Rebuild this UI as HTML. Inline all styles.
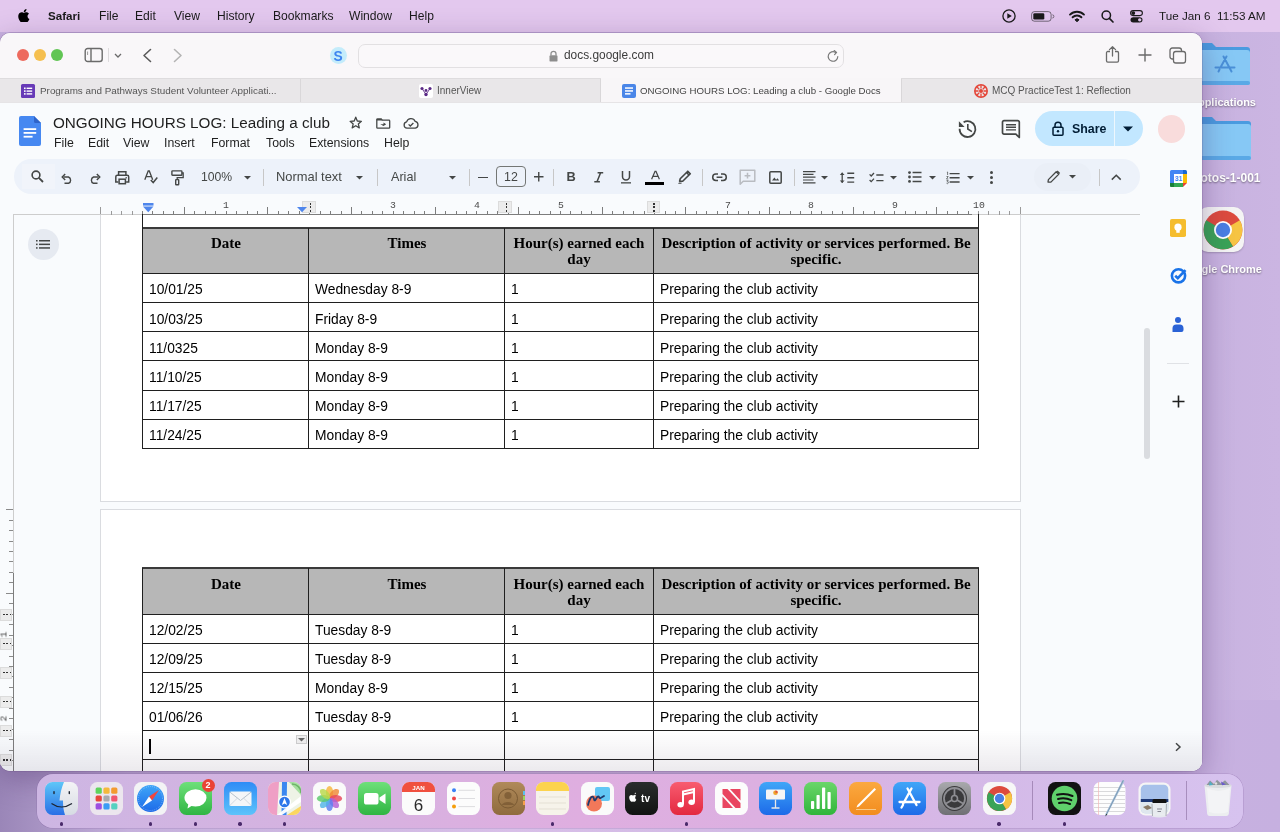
<!DOCTYPE html><html><head><meta charset="utf-8"><title>Docs</title><style>
*{margin:0;padding:0;box-sizing:border-box}
html,body{width:1280px;height:832px;overflow:hidden}
body{position:relative;background:#c8b2e0;font-family:"Liberation Sans",sans-serif;color:#000}
.ab{position:absolute}
.t{position:absolute;white-space:nowrap;line-height:1;will-change:transform}
#menubar{position:absolute;left:0;top:0;width:1280px;height:32px;background:#e3c8ee}
#win{position:absolute;left:0;top:33px;width:1202px;height:738px;border-radius:10px;overflow:hidden;background:#f9fbfd;box-shadow:0 0 0 0.5px rgba(90,60,110,.35),0 8px 30px rgba(60,30,90,.35)}
#stb{position:absolute;left:0;top:0;width:1202px;height:45px;background:#f9f7f9}
#tabs{position:absolute;left:0;top:45px;width:1202px;height:24px;background:#e9e7e9;border-top:1px solid #dcdadc;border-bottom:1px solid #e0dee0}
#dock{position:absolute;left:37px;top:774px;width:1206px;height:54px;border-radius:16px;background:linear-gradient(90deg,#cdb6e3 0%,#d6b2e0 25%,#dfaee0 45%,#dcb0e1 60%,#d4bae8 80%,#d7c3ef 100%);box-shadow:0 0 0 0.5px rgba(120,80,150,.35)}
</style></head><body>
<div id="menubar">
<svg class="ab" style="left:16.8px;top:8.5px" width="13.6" height="13.6" viewBox="0 0 24 24"><path fill="#000" d="M12.152 6.896c-.948 0-2.415-1.078-3.96-1.04-2.04.027-3.91 1.183-4.961 3.014-2.117 3.675-.546 9.103 1.519 12.09 1.013 1.454 2.208 3.09 3.792 3.039 1.52-.065 2.09-.987 3.935-.987 1.831 0 2.35.987 3.96.948 1.637-.026 2.676-1.48 3.676-2.948 1.156-1.688 1.636-3.325 1.662-3.415-.039-.013-3.182-1.221-3.22-4.857-.026-3.04 2.48-4.494 2.597-4.559-1.429-2.09-3.623-2.324-4.39-2.376-2-.156-3.675 1.09-4.61 1.09zM15.53 3.83c.843-1.012 1.4-2.427 1.245-3.83-1.207.052-2.662.805-3.532 1.818-.78.896-1.454 2.338-1.273 3.714 1.338.104 2.715-.688 3.559-1.701"/></svg>
<div class="t" style="left:47.50px;top:10.08px;font-size:11.6px;font-weight:bold;color:#1a1a1a">Safari</div>
<div class="t" style="left:98.50px;top:9.66px;font-size:12.1px;color:#1a1a1a">File</div>
<div class="t" style="left:135.00px;top:9.66px;font-size:12.1px;color:#1a1a1a">Edit</div>
<div class="t" style="left:173.50px;top:9.66px;font-size:12.1px;color:#1a1a1a">View</div>
<div class="t" style="left:217.00px;top:9.66px;font-size:12.1px;color:#1a1a1a">History</div>
<div class="t" style="left:272.50px;top:9.66px;font-size:12.1px;color:#1a1a1a">Bookmarks</div>
<div class="t" style="left:349.00px;top:9.66px;font-size:12.1px;color:#1a1a1a">Window</div>
<div class="t" style="left:409.00px;top:9.66px;font-size:12.1px;color:#1a1a1a">Help</div>
<div class="t" style="left:1159.00px;top:10.00px;font-size:11.7px;color:#1a1a1a">Tue Jan 6&nbsp;&nbsp;11:53 AM</div>
</div>
<svg class="ab" style="left:1002.3px;top:8.9px;overflow:visible" width="14" height="14" viewBox="0 0 14 14"><circle cx="7" cy="7" r="6.1" fill="none" stroke="#1a1a1a" stroke-width="1.3"/><path d="M5.3 4.2 L9.8 7 L5.3 9.8 Z" fill="#1a1a1a"/></svg>
<svg class="ab" style="left:1031px;top:10.8px;overflow:visible" width="23" height="11" viewBox="0 0 23 11"><rect x="0.6" y="0.6" width="19.5" height="9.6" rx="2.8" fill="none" stroke="#1a1a1a" stroke-width="1" opacity="0.55"/><rect x="2.3" y="2.3" width="11" height="6.2" rx="1.3" fill="#1a1a1a"/><path d="M21.3 3.8 A1.6 1.6 0 0 1 21.3 7" fill="none" stroke="#1a1a1a" stroke-width="1" opacity="0.5"/></svg>
<svg class="ab" style="left:1069.2px;top:9.8px;overflow:visible" width="16" height="12" viewBox="0 0 16 12"><path d="M1 4.6 A10 10 0 0 1 15 4.6" fill="none" stroke="#1a1a1a" stroke-width="1.9" stroke-linecap="round"/><path d="M3.6 7.3 A6.3 6.3 0 0 1 12.4 7.3" fill="none" stroke="#1a1a1a" stroke-width="1.9" stroke-linecap="round"/><path d="M6 9.8 A2.7 2.7 0 0 1 10 9.8 L8 11.8 Z" fill="#1a1a1a" stroke="#1a1a1a" stroke-width="1" stroke-linejoin="round"/></svg>
<svg class="ab" style="left:1101px;top:9.5px;overflow:visible" width="13" height="13" viewBox="0 0 13 13"><circle cx="5.3" cy="5.3" r="4.2" fill="none" stroke="#1a1a1a" stroke-width="1.5"/><path d="M8.4 8.4 L12 12" stroke="#1a1a1a" stroke-width="1.7" stroke-linecap="round"/></svg>
<svg class="ab" style="left:1129.5px;top:9.8px;overflow:visible" width="13" height="13" viewBox="0 0 13 13"><rect x="0.6" y="0.6" width="11.8" height="5" rx="2.5" fill="none" stroke="#1a1a1a" stroke-width="1.1"/><circle cx="3.3" cy="3.1" r="1.9" fill="#1a1a1a"/><rect x="0.5" y="7.2" width="12" height="5.3" rx="2.65" fill="#1a1a1a"/><circle cx="9.7" cy="9.85" r="1.7" fill="#e3c8ee"/></svg>
<div class="ab" style="left:1150px;top:32px;width:130px;height:800px;background:linear-gradient(90deg,#b9a0d2 0,#c8b3e0 60px,#cbb5e2 130px)"></div>
<div class="ab" style="left:0;top:700px;width:1280px;height:132px;background:linear-gradient(90deg,#9a86b8,#c5b0dc 10%,#d8bfe8 40%,#cab2e0 80%,#c6b0e0)"></div>
<svg class="ab" style="left:1196px;top:41.7px;overflow:visible" width="54" height="43" viewBox="0 0 54 43"><path d="M0 4 A3 3 0 0 1 3 1 H16 L20 5 H51 A3 3 0 0 1 54 8 V40 A3 3 0 0 1 51 43 H3 A3 3 0 0 1 0 40 Z" fill="#4a9be0"/><rect x="0" y="8" width="54" height="35" rx="3" fill="#86c8f5"/><rect x="0" y="39" width="54" height="4" rx="2" fill="#5aa9e6"/></svg>
<svg class="ab" style="left:1213px;top:54px;overflow:visible" width="24" height="22" viewBox="0 0 24 22"><g stroke="#4a90d8" stroke-width="2" stroke-linecap="round" fill="none"><path d="M10.5 2.5 L18.5 17.5 M13.5 2.5 L8 12.5 M6.5 15.5 L5.5 17.5 M2.5 13.5 H21.5"/></g></svg>
<div class="t" style="left:1136px;width:120px;text-align:right;top:97px;font-size:11px;font-weight:bold;color:#fff;text-shadow:0 1px 2px rgba(0,0,0,.45)">Applications</div>
<svg class="ab" style="left:1196px;top:116px;overflow:visible" width="55" height="44" viewBox="0 0 55 44"><path d="M0 4 A3 3 0 0 1 3 1 H16 L20 5 H52 A3 3 0 0 1 55 8 V41 A3 3 0 0 1 52 44 H3 A3 3 0 0 1 0 41 Z" fill="#4a9be0"/><rect x="0" y="8" width="55" height="36" rx="3" fill="#86c8f5"/><rect x="0" y="40" width="55" height="4" rx="2" fill="#5aa9e6"/></svg>
<div class="t" style="left:1140px;width:120.5px;text-align:right;top:172px;font-size:12px;font-weight:bold;color:#fff;text-shadow:0 1px 2px rgba(0,0,0,.45)">otos-1-001</div>
<div class="ab" style="left:1198px;top:207px;width:46px;height:45px;border-radius:10px;background:#f4f4f4;box-shadow:0 1px 2px rgba(0,0,0,.2)"></div>
<svg class="ab" style="left:1202.6px;top:209.6px;overflow:visible" width="40" height="40" viewBox="0 0 40 40"><circle cx="20" cy="20" r="19.4" fill="#dd4b3e"/><path d="M20 20 L36.8 10.3 A19.4 19.4 0 0 1 30 36.6 Z" fill="#f6c443"/><path d="M20 20 L30 36.6 A19.4 19.4 0 0 1 3.2 10.3 Z" fill="#3aa357"/><path d="M20 20 L3.2 10.3 A19.4 19.4 0 0 1 3.3 10.2 Z" fill="#3aa357"/><circle cx="20" cy="20" r="9" fill="#fff"/><circle cx="20" cy="20" r="7.2" fill="#4a7fe4"/></svg>
<div class="t" style="left:1142px;width:120px;text-align:right;top:263.5px;font-size:11px;font-weight:bold;color:#fff;text-shadow:0 1px 2px rgba(0,0,0,.45)">Google Chrome</div>
<div id="win"><div class="ab" style="left:0;top:-33px;width:1202px;height:832px">
<div class="ab" style="left:0px;top:33px;width:1202px;height:45px;background:#f9f7f9"></div>
<div class="ab" style="left:16.6px;top:49.4px;width:12px;height:12px;border-radius:50%;background:#ed6a5e"></div>
<div class="ab" style="left:34px;top:49.4px;width:12px;height:12px;border-radius:50%;background:#f5bf4f"></div>
<div class="ab" style="left:51.4px;top:49.4px;width:12px;height:12px;border-radius:50%;background:#61c554"></div>
<svg class="ab" style="left:84px;top:47px;overflow:visible" width="20" height="16" viewBox="0 0 20 16"><rect x="1.2" y="1.5" width="17" height="13" rx="2.5" fill="none" stroke="#6a6a6a" stroke-width="1.4"/><line x1="7" y1="1.5" x2="7" y2="14.5" stroke="#6a6a6a" stroke-width="1.4"/><line x1="3.6" y1="4.5" x2="3.6" y2="8" stroke="#9a9a9a" stroke-width="1"/></svg>
<div class="ab" style="left:108px;top:48px;width:1px;height:14px;background:#dddbdd"></div>
<svg class="ab" style="left:114px;top:53px;overflow:visible" width="8" height="5" viewBox="0 0 8 5"><path d="M1 1 L4 4 L7 1" fill="none" stroke="#6a6a6a" stroke-width="1.3"/></svg>
<svg class="ab" style="left:142px;top:48px;overflow:visible" width="10" height="15" viewBox="0 0 10 15"><path d="M8.5 1.5 L2 7.5 L8.5 13.5" fill="none" stroke="#5a5a5a" stroke-width="1.6" stroke-linecap="round" stroke-linejoin="round"/></svg>
<svg class="ab" style="left:173px;top:48px;overflow:visible" width="10" height="15" viewBox="0 0 10 15"><path d="M1.5 1.5 L8 7.5 L1.5 13.5" fill="none" stroke="#b4b4b4" stroke-width="1.6" stroke-linecap="round" stroke-linejoin="round"/></svg>
<div class="ab" style="left:329.8px;top:47px;width:17px;height:17px;border-radius:50%;background:#c4ecfb"></div>
<div class="t" style="left:138.30px;width:400px;text-align:center;top:49.62px;font-size:13.8px;font-weight:bold;color:#3d84f0">S</div>
<div class="ab" style="left:358px;top:43.5px;width:486px;height:24.5px;border-radius:7px;border:1px solid #e2e0e2;background:#faf8fa"></div>
<svg class="ab" style="left:549px;top:50px;overflow:visible" width="9" height="12" viewBox="0 0 9 12"><path d="M2 5.5 V3.8 A2.5 2.5 0 0 1 7 3.8 V5.5" fill="none" stroke="#8d8d8d" stroke-width="1.3"/><rect x="0.5" y="5.3" width="8" height="6.3" rx="1.2" fill="#8d8d8d"/></svg>
<div class="t" style="left:563.50px;top:50.23px;font-size:11.9px;color:#3c3c3c">docs.google.com</div>
<svg class="ab" style="left:827px;top:50px;overflow:visible" width="13" height="13" viewBox="0 0 13 13"><path d="M10.8 6.5 A4.8 4.8 0 1 1 8.6 2.4" fill="none" stroke="#7a7a7a" stroke-width="1.2" stroke-linecap="round"/><path d="M7.2 0.6 L9.6 2.4 L7.6 4.6" fill="none" stroke="#7a7a7a" stroke-width="1.2" stroke-linecap="round" stroke-linejoin="round"/></svg>
<svg class="ab" style="left:1105px;top:45px;overflow:visible" width="16" height="19" viewBox="0 0 16 19"><path d="M5 6.5 H2.8 A1.3 1.3 0 0 0 1.5 7.8 V15.8 A1.3 1.3 0 0 0 2.8 17.1 H12.2 A1.3 1.3 0 0 0 13.5 15.8 V7.8 A1.3 1.3 0 0 0 12.2 6.5 H10" fill="none" stroke="#6a6a6a" stroke-width="1.3"/><path d="M7.5 11 V1.8 M4.5 4.6 L7.5 1.6 L10.5 4.6" fill="none" stroke="#6a6a6a" stroke-width="1.3" stroke-linecap="round" stroke-linejoin="round"/></svg>
<svg class="ab" style="left:1138px;top:48px;overflow:visible" width="14" height="14" viewBox="0 0 14 14"><path d="M7 1 V13 M1 7 H13" stroke="#6a6a6a" stroke-width="1.4" stroke-linecap="round"/></svg>
<svg class="ab" style="left:1169px;top:46.5px;overflow:visible" width="18" height="17" viewBox="0 0 18 17"><rect x="1" y="1" width="11.5" height="11" rx="2.3" fill="none" stroke="#6a6a6a" stroke-width="1.3"/><rect x="4.5" y="4.5" width="12" height="11.5" rx="2.3" fill="#f9f7f9" stroke="#6a6a6a" stroke-width="1.3"/></svg>
<div class="ab" style="left:0px;top:78px;width:1202px;height:24.5px;background:#e9e7e9"></div>
<div class="ab" style="left:0px;top:78px;width:1202px;height:1px;background:#dedcde"></div>
<div class="ab" style="left:601px;top:78px;width:300px;height:24.5px;background:#f8f6f8"></div>
<div class="ab" style="left:300px;top:79px;width:1px;height:23px;background:#d9d7d9"></div>
<div class="ab" style="left:600px;top:79px;width:1px;height:23px;background:#d9d7d9"></div>
<div class="ab" style="left:901px;top:79px;width:1px;height:23px;background:#d9d7d9"></div>
<div class="ab" style="left:0px;top:102px;width:1202px;height:1px;background:#e6e4e6"></div>
<svg class="ab" style="left:21px;top:84px;overflow:visible" width="14" height="14" viewBox="0 0 14 14"><rect x="0" y="0" width="14" height="14" rx="1.5" fill="#673ab7"/><g fill="#fff"><rect x="3" y="3.5" width="1.6" height="1.6"/><rect x="3" y="6.3" width="1.6" height="1.6"/><rect x="3" y="9.1" width="1.6" height="1.6"/><rect x="5.6" y="3.6" width="5.6" height="1.4"/><rect x="5.6" y="6.4" width="5.6" height="1.4"/><rect x="5.6" y="9.2" width="5.6" height="1.4"/></g></svg>
<div class="t" style="left:39.50px;top:86.32px;font-size:9.9px;color:#555">Programs and Pathways Student Volunteer Applicati...</div>
<svg class="ab" style="left:418.5px;top:84px;overflow:visible" width="14" height="14" viewBox="0 0 14 14"><rect width="14" height="14" rx="2" fill="#fff"/><g fill="#5b2a86"><circle cx="3" cy="4.5" r="1.6"/><circle cx="11" cy="4.5" r="1.6"/><circle cx="7" cy="6.5" r="1.4"/><circle cx="7" cy="10.5" r="1.7"/></g><path d="M3 4.5 L7 10.5 L11 4.5" stroke="#5b2a86" stroke-width="0.9" fill="none"/></svg>
<div class="t" style="left:437.00px;top:86.23px;font-size:10px;color:#555">InnerView</div>
<svg class="ab" style="left:621.7px;top:84px;overflow:visible" width="14" height="14" viewBox="0 0 14 14"><rect width="14" height="14" rx="2" fill="#4a86e8"/><g fill="#fff"><rect x="3" y="3.3" width="8" height="1.5"/><rect x="3" y="6.2" width="8" height="1.5"/><rect x="3" y="9.1" width="5.5" height="1.5"/></g></svg>
<div class="t" style="left:640.30px;top:86.49px;font-size:9.7px;color:#444">ONGOING HOURS LOG: Leading a club - Google Docs</div>
<svg class="ab" style="left:973.5px;top:84px;overflow:visible" width="14" height="14" viewBox="0 0 14 14"><circle cx="7" cy="7" r="6.2" fill="none" stroke="#e4473a" stroke-width="1.6"/><circle cx="7" cy="7" r="2" fill="#e4473a"/><g stroke="#e4473a" stroke-width="1.3"><path d="M7 1 V4.5 M7 9.5 V13 M1 7 H4.5 M9.5 7 H13 M2.8 2.8 L5.2 5.2 M8.8 8.8 L11.2 11.2 M11.2 2.8 L8.8 5.2 M5.2 8.8 L2.8 11.2"/></g></svg>
<div class="t" style="left:991.50px;top:86.23px;font-size:10px;color:#555">MCQ PracticeTest 1: Reflection</div>
<div class="ab" style="left:0px;top:103px;width:1202px;height:669px;background:#f9fbfd"></div>
<svg class="ab" style="left:19px;top:116px;overflow:visible" width="22" height="30" viewBox="0 0 22 30"><path d="M2 0 H15 L22 7 V28 A2 2 0 0 1 20 30 H2 A2 2 0 0 1 0 28 V2 A2 2 0 0 1 2 0 Z" fill="#4688f1"/><path d="M15 0 L22 7 H16.5 A1.5 1.5 0 0 1 15 5.5 Z" fill="#2f64c9"/><g fill="#fff"><rect x="4.6" y="12.2" width="12.6" height="1.8"/><rect x="4.6" y="16" width="12.6" height="1.8"/><rect x="4.6" y="19.8" width="9" height="1.8"/></g></svg>
<div class="t" style="left:53.20px;top:114.90px;font-size:15.24px;color:#1f1f1f">ONGOING HOURS LOG: Leading a club</div>
<svg class="ab" style="left:348.5px;top:116.3px;overflow:visible" width="13.5" height="13" viewBox="0 0 13.5 13"><path d="M6.75 1.2 L8.3 5 L12.4 5.3 L9.3 7.9 L10.3 11.9 L6.75 9.7 L3.2 11.9 L4.2 7.9 L1.1 5.3 L5.2 5 Z" fill="none" stroke="#444746" stroke-width="1.3" stroke-linejoin="round"/></svg>
<svg class="ab" style="left:376px;top:117.6px;overflow:visible" width="14.5" height="11" viewBox="0 0 14.5 11"><path d="M0.8 1.6 A0.8 0.8 0 0 1 1.6 0.8 H5.2 L6.4 2.2 H12.9 A0.8 0.8 0 0 1 13.7 3 V9.4 A0.8 0.8 0 0 1 12.9 10.2 H1.6 A0.8 0.8 0 0 1 0.8 9.4 Z" fill="none" stroke="#444746" stroke-width="1.3"/><path d="M0.8 1 H5.2 L6.4 2.4 H0.8 Z" fill="#444746"/><path d="M4.3 6.2 H7.5 V4.4 L10.2 6.2 L7.5 8 Z" fill="#444746"/></svg>
<svg class="ab" style="left:403px;top:117.6px;overflow:visible" width="16" height="11" viewBox="0 0 16 11"><path d="M4 10.2 A3.2 3.2 0 0 1 3.6 3.9 A4.6 4.6 0 0 1 12.2 3.4 A3.5 3.5 0 0 1 12.4 10.2 Z" fill="none" stroke="#444746" stroke-width="1.3" stroke-linejoin="round"/><path d="M5.6 6.4 L7.3 8 L10.4 5" fill="none" stroke="#444746" stroke-width="1.3"/></svg>
<div class="t" style="left:54.00px;top:136.59px;font-size:12.3px;color:#1f1f1f">File</div>
<div class="t" style="left:87.50px;top:136.59px;font-size:12.3px;color:#1f1f1f">Edit</div>
<div class="t" style="left:123.40px;top:136.59px;font-size:12.3px;color:#1f1f1f">View</div>
<div class="t" style="left:164.00px;top:136.59px;font-size:12.3px;color:#1f1f1f">Insert</div>
<div class="t" style="left:211.00px;top:136.59px;font-size:12.3px;color:#1f1f1f">Format</div>
<div class="t" style="left:265.60px;top:136.59px;font-size:12.3px;color:#1f1f1f">Tools</div>
<div class="t" style="left:308.75px;top:136.59px;font-size:12.3px;color:#1f1f1f">Extensions</div>
<div class="t" style="left:383.75px;top:136.59px;font-size:12.3px;color:#1f1f1f">Help</div>
<svg class="ab" style="left:955px;top:116px;overflow:visible" width="24" height="24" viewBox="0 0 24 24"><path d="M4.6 12.8 A7.9 7.9 0 1 0 8.6 6.2" fill="none" stroke="#444746" stroke-width="1.8"/><path d="M3.9 5.3 V11 H9.6 Z" fill="#444746"/><path d="M12.8 8 V13 L16.9 15.6" fill="none" stroke="#444746" stroke-width="1.6"/></svg>
<svg class="ab" style="left:1001px;top:119px;overflow:visible" width="21" height="20" viewBox="0 0 21 20"><path d="M1.5 3.1 A1.5 1.5 0 0 1 3 1.6 H16.8 A1.5 1.5 0 0 1 18.3 3.1 V18.5 L14.9 15.1 H3 A1.5 1.5 0 0 1 1.5 13.6 Z" fill="none" stroke="#444746" stroke-width="1.7" stroke-linejoin="round"/><path d="M5 5.8 H15 M5 8.3 H15 M5 10.9 H15" stroke="#444746" stroke-width="1.4"/></svg>
<div class="ab" style="left:1035px;top:111.3px;width:108px;height:35px;border-radius:17.5px;background:#c2e7ff"></div>
<div class="ab" style="left:1113.8px;top:111.3px;width:1.0px;height:35.000000000000014px;background:#f9fbfd;opacity:.8"></div>
<svg class="ab" style="left:1051.5px;top:120.5px;overflow:visible" width="12" height="15" viewBox="0 0 12 15"><path d="M3 6.3 V4.3 A3 3 0 0 1 9 4.3 V6.3" fill="none" stroke="#001d35" stroke-width="1.5"/><rect x="1" y="6.3" width="10" height="8" rx="1" fill="none" stroke="#001d35" stroke-width="1.5"/><circle cx="6" cy="10.3" r="1.2" fill="#001d35"/></svg>
<div class="t" style="left:1072.00px;top:123.00px;font-size:12.4px;font-weight:bold;color:#001d35">Share</div>
<svg class="ab" style="left:1123px;top:126px;overflow:visible" width="10" height="6" viewBox="0 0 10 6"><path d="M0 0.5 H10 L5 5.5 Z" fill="#001d35"/></svg>
<div class="ab" style="left:1157.5px;top:115px;width:27.5px;height:27.5px;border-radius:50%;background:#f9dcdc"></div>
<div class="ab" style="left:13.75px;top:159.25px;width:1126.25px;height:34.5px;border-radius:17.25px;background:#edf2fa"></div>
<div class="ab" style="left:22px;top:164px;width:32.5px;height:24.5px;background:#f1f4fa"></div>
<svg class="ab" style="left:31px;top:170.3px;overflow:visible" width="13" height="13" viewBox="0 0 13 13"><circle cx="5" cy="5" r="3.9" fill="none" stroke="#444746" stroke-width="1.6"/><path d="M7.9 7.9 L12 12" stroke="#444746" stroke-width="1.8"/></svg>
<svg class="ab" style="left:61px;top:172.5px;overflow:visible" width="12" height="11" viewBox="0 0 12 11"><path d="M2.5 4 H7.5 A3.4 3.4 0 0 1 7.5 10.3 H3.5" fill="none" stroke="#444746" stroke-width="1.4"/><path d="M4.2 1 L1.2 4 L4.2 7" fill="none" stroke="#444746" stroke-width="1.4"/></svg>
<svg class="ab" style="left:88.5px;top:172.5px;overflow:visible" width="12" height="11" viewBox="0 0 12 11"><path d="M9.5 4 H4.5 A3.4 3.4 0 0 0 4.5 10.3 H8.5" fill="none" stroke="#444746" stroke-width="1.4"/><path d="M7.8 1 L10.8 4 L7.8 7" fill="none" stroke="#444746" stroke-width="1.4"/></svg>
<svg class="ab" style="left:115.3px;top:170.5px;overflow:visible" width="14.5" height="13.5" viewBox="0 0 14.5 13.5"><path d="M3.6 4 V0.8 H10.9 V4" fill="none" stroke="#444746" stroke-width="1.5"/><path d="M3.4 10.9 H0.8 V5.8 A1.6 1.6 0 0 1 2.4 4.2 H12.1 A1.6 1.6 0 0 1 13.7 5.8 V10.9 H11.1" fill="none" stroke="#444746" stroke-width="1.5"/><rect x="4.1" y="8.2" width="6.3" height="4.5" fill="none" stroke="#444746" stroke-width="1.5"/><circle cx="11.2" cy="6.7" r="0.8" fill="#444746"/></svg>
<svg class="ab" style="left:144px;top:170px;overflow:visible" width="14" height="14" viewBox="0 0 14 14"><path d="M0.8 9.8 L4.2 1 H5.3 L8.7 9.8 M2.1 6.6 H7.4" fill="none" stroke="#444746" stroke-width="1.3"/><path d="M6.8 10 L9.2 12.5 L13.3 7.5" fill="none" stroke="#444746" stroke-width="1.5"/></svg>
<svg class="ab" style="left:171px;top:170px;overflow:visible" width="13" height="15.5" viewBox="0 0 13 15.5"><rect x="0.9" y="0.9" width="10" height="4.4" rx="0.6" fill="none" stroke="#444746" stroke-width="1.4"/><path d="M10.9 3 H12.2 V7.7 H6.2 V9.6" fill="none" stroke="#444746" stroke-width="1.3"/><rect x="4.7" y="9.6" width="3" height="5.2" rx="0.5" fill="none" stroke="#444746" stroke-width="1.4"/></svg>
<div class="t" style="left:200.50px;top:171.17px;font-size:12.2px;color:#444746">100%</div>
<svg class="ab" style="left:243.5px;top:175.6px;overflow:visible" width="7" height="4" viewBox="0 0 7 4"><path d="M0 0 H7 L3.5 3.6 Z" fill="#444746"/></svg>
<div class="ab" style="left:262.5px;top:168.5px;width:1.0px;height:17.0px;background:#c7c7c7"></div>
<div class="t" style="left:276.30px;top:170.58px;font-size:12.9px;color:#444746">Normal text</div>
<svg class="ab" style="left:356.0px;top:175.6px;overflow:visible" width="7" height="4" viewBox="0 0 7 4"><path d="M0 0 H7 L3.5 3.6 Z" fill="#444746"/></svg>
<div class="ab" style="left:376.5px;top:168.5px;width:1.0px;height:17.0px;background:#c7c7c7"></div>
<div class="t" style="left:390.50px;top:170.83px;font-size:12.6px;color:#444746">Arial</div>
<svg class="ab" style="left:448.5px;top:175.6px;overflow:visible" width="7" height="4" viewBox="0 0 7 4"><path d="M0 0 H7 L3.5 3.6 Z" fill="#444746"/></svg>
<div class="ab" style="left:468.5px;top:168.5px;width:1.0px;height:17.0px;background:#c7c7c7"></div>
<div class="ab" style="left:478px;top:176.6px;width:9.5px;height:1.4000000000000057px;background:#444746"></div>
<div class="ab" style="left:496.3px;top:166.3px;width:29.5px;height:20.5px;border:1px solid #747775;border-radius:4px"></div>
<div class="t" style="left:311.00px;width:400px;text-align:center;top:170.80px;font-size:12.4px;color:#444746">12</div>
<svg class="ab" style="left:534px;top:172px;overflow:visible" width="9.5" height="9.5" viewBox="0 0 9.5 9.5"><path d="M4.75 0 V9.5 M0 4.75 H9.5" stroke="#444746" stroke-width="1.4"/></svg>
<div class="ab" style="left:553px;top:168.5px;width:1px;height:17.0px;background:#c7c7c7"></div>
<div class="t" style="left:370.50px;width:400px;text-align:center;top:170.76px;font-size:12.8px;font-weight:bold;color:#444746">B</div>
<svg class="ab" style="left:593.5px;top:172px;overflow:visible" width="9.5" height="10.5" viewBox="0 0 9.5 10.5"><path d="M3.6 0.7 H9.2 M0.3 9.8 H5.9 M6.6 0.7 L3 9.8" stroke="#444746" stroke-width="1.5" fill="none"/></svg>
<svg class="ab" style="left:621px;top:171px;overflow:visible" width="10" height="12.5" viewBox="0 0 10 12.5"><path d="M1.5 0 V5.6 A3.5 3.5 0 0 0 8.5 5.6 V0" fill="none" stroke="#444746" stroke-width="1.5"/><rect x="0" y="11.2" width="10" height="1.3" fill="#444746"/></svg>
<svg class="ab" style="left:650.5px;top:170.6px;overflow:visible" width="9" height="8.3" viewBox="0 0 9 8.3"><path d="M0.6 8.2 L4 0.4 H5 L8.4 8.2 M2 5.4 H7" fill="none" stroke="#444746" stroke-width="1.2"/></svg>
<div class="ab" style="left:644.8px;top:182px;width:19.700000000000045px;height:3.1999999999999886px;background:#000"></div>
<svg class="ab" style="left:676px;top:168px;overflow:visible" width="17" height="17" viewBox="0 0 17 17"><path d="M3 14.5 L2 15.8 H5.2 L6 14.8 Z" fill="#444746"/><path d="M3.6 13.2 L4.2 10.8 L11.8 3.2 L14.3 5.7 L6.7 13.3 Z" fill="none" stroke="#444746" stroke-width="1.6" stroke-linejoin="round"/><path d="M10.5 4.5 L13 7" stroke="#444746" stroke-width="1.6"/></svg>
<div class="ab" style="left:702.3px;top:168.5px;width:1.0px;height:17.0px;background:#c7c7c7"></div>
<svg class="ab" style="left:711.5px;top:172.8px;overflow:visible" width="15" height="8.5" viewBox="0 0 15 8.5"><path d="M6 1 H3.9 A3.2 3.2 0 0 0 3.9 7.4 H6 M9 1 H11.1 A3.2 3.2 0 0 1 11.1 7.4 H9 M4.6 4.2 H10.4" fill="none" stroke="#444746" stroke-width="1.5"/></svg>
<svg class="ab" style="left:738.5px;top:168.5px;overflow:visible" width="17" height="17" viewBox="0 0 17 17"><path d="M1.2 1.2 H15.8 V12.2 H4.2 L1.2 15.2 Z" fill="none" stroke="#b9bcc1" stroke-width="1.5" stroke-linejoin="round"/><path d="M8.5 3.8 V9.6 M5.6 6.7 H11.4" stroke="#b9bcc1" stroke-width="1.5"/></svg>
<svg class="ab" style="left:768.8px;top:171px;overflow:visible" width="13" height="13" viewBox="0 0 13 13"><rect x="0.8" y="0.8" width="11.4" height="11.4" rx="1" fill="none" stroke="#444746" stroke-width="1.5"/><path d="M3 9.6 L5.4 6.6 L7.1 8.7 L8.5 7.2 L10.2 9.6 Z" fill="#444746"/></svg>
<div class="ab" style="left:793.5px;top:168.5px;width:1.0px;height:17.0px;background:#c7c7c7"></div>
<svg class="ab" style="left:802.5px;top:171px;overflow:visible" width="13" height="12.5" viewBox="0 0 13 12.5"><path d="M0 0.6 H12.5 M0 3.4 H10.5 M0 6.2 H12.5 M0 9 H10.5 M0 11.8 H12.5" stroke="#444746" stroke-width="1.2"/></svg>
<svg class="ab" style="left:821.0px;top:175.6px;overflow:visible" width="7" height="4" viewBox="0 0 7 4"><path d="M0 0 H7 L3.5 3.6 Z" fill="#444746"/></svg>
<svg class="ab" style="left:839px;top:171.5px;overflow:visible" width="16" height="11.5" viewBox="0 0 16 11.5"><path d="M3.2 0.8 V10.7" stroke="#444746" stroke-width="1.3"/><path d="M0.8 3 L3.2 0.4 L5.6 3 Z M0.8 8.5 L3.2 11.1 L5.6 8.5 Z" fill="#444746"/><path d="M8.3 1.3 H15.2 M8.3 5.7 H15.2 M8.3 10.1 H15.2" stroke="#444746" stroke-width="1.4"/></svg>
<svg class="ab" style="left:868.5px;top:171.8px;overflow:visible" width="15" height="10.5" viewBox="0 0 15 10.5"><path d="M0.6 2.4 L2.2 4 L5 1 M0.6 8 L2.2 9.6 L5 6.6" fill="none" stroke="#444746" stroke-width="1.3"/><path d="M7.3 3 H14.5 M7.3 8.6 H14.5" stroke="#444746" stroke-width="1.4"/></svg>
<svg class="ab" style="left:890.2px;top:175.6px;overflow:visible" width="7" height="4" viewBox="0 0 7 4"><path d="M0 0 H7 L3.5 3.6 Z" fill="#444746"/></svg>
<svg class="ab" style="left:907.5px;top:171px;overflow:visible" width="14" height="12" viewBox="0 0 14 12"><circle cx="1.5" cy="1.6" r="1.4" fill="#444746"/><circle cx="1.5" cy="6" r="1.4" fill="#444746"/><circle cx="1.5" cy="10.4" r="1.4" fill="#444746"/><path d="M4.6 1.6 H13.5 M4.6 6 H13.5 M4.6 10.4 H13.5" stroke="#444746" stroke-width="1.5"/></svg>
<svg class="ab" style="left:929.0px;top:175.6px;overflow:visible" width="7" height="4" viewBox="0 0 7 4"><path d="M0 0 H7 L3.5 3.6 Z" fill="#444746"/></svg>
<svg class="ab" style="left:945.5px;top:171.5px;overflow:visible" width="14" height="11.5" viewBox="0 0 14 11.5"><path d="M0.9 0.2 L1.6 0 V3 M0.5 4.5 H2.2 L0.5 7 H2.3 M0.5 8.4 H2.2 L1.2 9.6 A1 1 0 1 1 0.5 11.2" fill="none" stroke="#444746" stroke-width="0.7"/><path d="M3.6 1.6 H13.6 M3.6 5.8 H13.6 M3.6 10 H13.6" stroke="#444746" stroke-width="1.4"/></svg>
<svg class="ab" style="left:967.2px;top:175.6px;overflow:visible" width="7" height="4" viewBox="0 0 7 4"><path d="M0 0 H7 L3.5 3.6 Z" fill="#444746"/></svg>
<div class="ab" style="left:989.6px;top:170.9px;width:3.2px;height:3.2px;border-radius:50%;background:#444746"></div>
<div class="ab" style="left:989.6px;top:175.9px;width:3.2px;height:3.2px;border-radius:50%;background:#444746"></div>
<div class="ab" style="left:989.6px;top:180.9px;width:3.2px;height:3.2px;border-radius:50%;background:#444746"></div>
<div class="ab" style="left:1033.5px;top:162.5px;width:57px;height:28px;border-radius:14px;background:#eaeff7"></div>
<svg class="ab" style="left:1047px;top:170.3px;overflow:visible" width="13.5" height="13" viewBox="0 0 13.5 13"><path d="M1 12 L1.4 9.6 L9.2 1.8 L11.7 4.3 L3.9 12.1 Z" fill="none" stroke="#444746" stroke-width="1.3" stroke-linejoin="round"/><path d="M9.6 1.4 L10.6 0.4 L13.1 2.9 L12.1 3.9 Z" fill="#444746"/></svg>
<svg class="ab" style="left:1068.5px;top:175.4px;overflow:visible" width="7" height="4" viewBox="0 0 7 4"><path d="M0 0 H7 L3.5 3.6 Z" fill="#444746"/></svg>
<div class="ab" style="left:1098.5px;top:168.5px;width:1.0px;height:17.0px;background:#c7c7c7"></div>
<svg class="ab" style="left:1110.5px;top:174.2px;overflow:visible" width="10.5" height="6.5" viewBox="0 0 10.5 6.5"><path d="M0.8 5.6 L5.25 1.2 L9.7 5.6" fill="none" stroke="#444746" stroke-width="1.5"/></svg>
<div class="ab" style="left:100px;top:214px;width:921px;height:288px;background:#fff;border:1px solid #dadce0;border-top:none"></div>
<div class="ab" style="left:100px;top:508.8px;width:921px;height:291.2px;background:#fff;border:1px solid #dadce0"></div>
<div class="ab" style="left:13px;top:214px;width:1127px;height:1px;background:#cdcdcd"></div>
<div class="ab" style="left:142.5px;top:214px;width:829.5px;height:1px;background:#7d7d7d"></div>
<div class="ab" style="left:100.2px;top:207.2px;width:1.0px;height:7.300000000000011px;background:#9a9a9a"></div>
<div class="ab" style="left:110.65px;top:210.5px;width:1.0px;height:4.0px;background:#9a9a9a"></div>
<div class="ab" style="left:121.1px;top:210.5px;width:1.0px;height:4.0px;background:#9a9a9a"></div>
<div class="ab" style="left:131.55px;top:210.5px;width:1.0px;height:4.0px;background:#9a9a9a"></div>
<div class="ab" style="left:142.0px;top:210.5px;width:1.0px;height:4.0px;background:#7d7d7d"></div>
<div class="ab" style="left:152.45px;top:210.5px;width:1.0px;height:4.0px;background:#7d7d7d"></div>
<div class="ab" style="left:162.9px;top:210.5px;width:1.0px;height:4.0px;background:#7d7d7d"></div>
<div class="ab" style="left:173.35px;top:210.5px;width:1.0px;height:4.0px;background:#7d7d7d"></div>
<div class="ab" style="left:183.8px;top:207.2px;width:1.0px;height:7.300000000000011px;background:#7d7d7d"></div>
<div class="ab" style="left:194.25px;top:210.5px;width:1.0px;height:4.0px;background:#7d7d7d"></div>
<div class="ab" style="left:204.7px;top:210.5px;width:1.0px;height:4.0px;background:#7d7d7d"></div>
<div class="ab" style="left:215.15px;top:210.5px;width:1.0px;height:4.0px;background:#7d7d7d"></div>
<div class="ab" style="left:225.6px;top:210.5px;width:1.0px;height:4.0px;background:#7d7d7d"></div>
<div class="ab" style="left:236.05px;top:210.5px;width:1.0px;height:4.0px;background:#7d7d7d"></div>
<div class="ab" style="left:246.5px;top:210.5px;width:1.0px;height:4.0px;background:#7d7d7d"></div>
<div class="ab" style="left:256.95px;top:210.5px;width:1.0px;height:4.0px;background:#7d7d7d"></div>
<div class="ab" style="left:267.4px;top:207.2px;width:1.0px;height:7.300000000000011px;background:#7d7d7d"></div>
<div class="ab" style="left:277.85px;top:210.5px;width:1.0px;height:4.0px;background:#7d7d7d"></div>
<div class="ab" style="left:288.3px;top:210.5px;width:1.0px;height:4.0px;background:#7d7d7d"></div>
<div class="ab" style="left:298.75px;top:210.5px;width:1.0px;height:4.0px;background:#7d7d7d"></div>
<div class="ab" style="left:309.2px;top:210.5px;width:1.0px;height:4.0px;background:#7d7d7d"></div>
<div class="ab" style="left:319.65px;top:210.5px;width:1.0px;height:4.0px;background:#7d7d7d"></div>
<div class="ab" style="left:330.1px;top:210.5px;width:1.0px;height:4.0px;background:#7d7d7d"></div>
<div class="ab" style="left:340.55px;top:210.5px;width:1.0px;height:4.0px;background:#7d7d7d"></div>
<div class="ab" style="left:351.0px;top:207.2px;width:1.0px;height:7.300000000000011px;background:#7d7d7d"></div>
<div class="ab" style="left:361.45px;top:210.5px;width:1.0px;height:4.0px;background:#7d7d7d"></div>
<div class="ab" style="left:371.9px;top:210.5px;width:1.0px;height:4.0px;background:#7d7d7d"></div>
<div class="ab" style="left:382.35px;top:210.5px;width:1.0px;height:4.0px;background:#7d7d7d"></div>
<div class="ab" style="left:392.8px;top:210.5px;width:1.0px;height:4.0px;background:#7d7d7d"></div>
<div class="ab" style="left:403.25px;top:210.5px;width:1.0px;height:4.0px;background:#7d7d7d"></div>
<div class="ab" style="left:413.7px;top:210.5px;width:1.0px;height:4.0px;background:#7d7d7d"></div>
<div class="ab" style="left:424.15px;top:210.5px;width:1.0px;height:4.0px;background:#7d7d7d"></div>
<div class="ab" style="left:434.6px;top:207.2px;width:1.0px;height:7.300000000000011px;background:#7d7d7d"></div>
<div class="ab" style="left:445.05px;top:210.5px;width:1.0px;height:4.0px;background:#7d7d7d"></div>
<div class="ab" style="left:455.5px;top:210.5px;width:1.0px;height:4.0px;background:#7d7d7d"></div>
<div class="ab" style="left:465.95px;top:210.5px;width:1.0px;height:4.0px;background:#7d7d7d"></div>
<div class="ab" style="left:476.4px;top:210.5px;width:1.0px;height:4.0px;background:#7d7d7d"></div>
<div class="ab" style="left:486.85px;top:210.5px;width:1.0px;height:4.0px;background:#7d7d7d"></div>
<div class="ab" style="left:497.3px;top:210.5px;width:1.0px;height:4.0px;background:#7d7d7d"></div>
<div class="ab" style="left:507.75px;top:210.5px;width:1.0px;height:4.0px;background:#7d7d7d"></div>
<div class="ab" style="left:518.2px;top:207.2px;width:1.0px;height:7.300000000000011px;background:#7d7d7d"></div>
<div class="ab" style="left:528.65px;top:210.5px;width:1.0px;height:4.0px;background:#7d7d7d"></div>
<div class="ab" style="left:539.1px;top:210.5px;width:1.0px;height:4.0px;background:#7d7d7d"></div>
<div class="ab" style="left:549.55px;top:210.5px;width:1.0px;height:4.0px;background:#7d7d7d"></div>
<div class="ab" style="left:560.0px;top:210.5px;width:1.0px;height:4.0px;background:#7d7d7d"></div>
<div class="ab" style="left:570.45px;top:210.5px;width:1.0px;height:4.0px;background:#7d7d7d"></div>
<div class="ab" style="left:580.9px;top:210.5px;width:1.0px;height:4.0px;background:#7d7d7d"></div>
<div class="ab" style="left:591.35px;top:210.5px;width:1.0px;height:4.0px;background:#7d7d7d"></div>
<div class="ab" style="left:601.8px;top:207.2px;width:1.0px;height:7.300000000000011px;background:#7d7d7d"></div>
<div class="ab" style="left:612.25px;top:210.5px;width:1.0px;height:4.0px;background:#7d7d7d"></div>
<div class="ab" style="left:622.7px;top:210.5px;width:1.0px;height:4.0px;background:#7d7d7d"></div>
<div class="ab" style="left:633.15px;top:210.5px;width:1.0px;height:4.0px;background:#7d7d7d"></div>
<div class="ab" style="left:643.6px;top:210.5px;width:1.0px;height:4.0px;background:#7d7d7d"></div>
<div class="ab" style="left:654.05px;top:210.5px;width:1.0px;height:4.0px;background:#7d7d7d"></div>
<div class="ab" style="left:664.5px;top:210.5px;width:1.0px;height:4.0px;background:#7d7d7d"></div>
<div class="ab" style="left:674.95px;top:210.5px;width:1.0px;height:4.0px;background:#7d7d7d"></div>
<div class="ab" style="left:685.4px;top:207.2px;width:1.0px;height:7.300000000000011px;background:#7d7d7d"></div>
<div class="ab" style="left:695.85px;top:210.5px;width:1.0px;height:4.0px;background:#7d7d7d"></div>
<div class="ab" style="left:706.3px;top:210.5px;width:1.0px;height:4.0px;background:#7d7d7d"></div>
<div class="ab" style="left:716.75px;top:210.5px;width:1.0px;height:4.0px;background:#7d7d7d"></div>
<div class="ab" style="left:727.2px;top:210.5px;width:1.0px;height:4.0px;background:#7d7d7d"></div>
<div class="ab" style="left:737.65px;top:210.5px;width:1.0px;height:4.0px;background:#7d7d7d"></div>
<div class="ab" style="left:748.1px;top:210.5px;width:1.0px;height:4.0px;background:#7d7d7d"></div>
<div class="ab" style="left:758.55px;top:210.5px;width:1.0px;height:4.0px;background:#7d7d7d"></div>
<div class="ab" style="left:769.0px;top:207.2px;width:1.0px;height:7.300000000000011px;background:#7d7d7d"></div>
<div class="ab" style="left:779.45px;top:210.5px;width:1.0px;height:4.0px;background:#7d7d7d"></div>
<div class="ab" style="left:789.9px;top:210.5px;width:1.0px;height:4.0px;background:#7d7d7d"></div>
<div class="ab" style="left:800.35px;top:210.5px;width:1.0px;height:4.0px;background:#7d7d7d"></div>
<div class="ab" style="left:810.8px;top:210.5px;width:1.0px;height:4.0px;background:#7d7d7d"></div>
<div class="ab" style="left:821.25px;top:210.5px;width:1.0px;height:4.0px;background:#7d7d7d"></div>
<div class="ab" style="left:831.7px;top:210.5px;width:1.0px;height:4.0px;background:#7d7d7d"></div>
<div class="ab" style="left:842.15px;top:210.5px;width:1.0px;height:4.0px;background:#7d7d7d"></div>
<div class="ab" style="left:852.6px;top:207.2px;width:1.0px;height:7.300000000000011px;background:#7d7d7d"></div>
<div class="ab" style="left:863.05px;top:210.5px;width:1.0px;height:4.0px;background:#7d7d7d"></div>
<div class="ab" style="left:873.5px;top:210.5px;width:1.0px;height:4.0px;background:#7d7d7d"></div>
<div class="ab" style="left:883.95px;top:210.5px;width:1.0px;height:4.0px;background:#7d7d7d"></div>
<div class="ab" style="left:894.4px;top:210.5px;width:1.0px;height:4.0px;background:#7d7d7d"></div>
<div class="ab" style="left:904.85px;top:210.5px;width:1.0px;height:4.0px;background:#7d7d7d"></div>
<div class="ab" style="left:915.3px;top:210.5px;width:1.0px;height:4.0px;background:#7d7d7d"></div>
<div class="ab" style="left:925.75px;top:210.5px;width:1.0px;height:4.0px;background:#7d7d7d"></div>
<div class="ab" style="left:936.2px;top:207.2px;width:1.0px;height:7.300000000000011px;background:#7d7d7d"></div>
<div class="ab" style="left:946.65px;top:210.5px;width:1.0px;height:4.0px;background:#7d7d7d"></div>
<div class="ab" style="left:957.1px;top:210.5px;width:1.0px;height:4.0px;background:#7d7d7d"></div>
<div class="ab" style="left:967.55px;top:210.5px;width:1.0px;height:4.0px;background:#7d7d7d"></div>
<div class="ab" style="left:978.0px;top:210.5px;width:1.0px;height:4.0px;background:#9a9a9a"></div>
<div class="ab" style="left:988.45px;top:210.5px;width:1.0px;height:4.0px;background:#9a9a9a"></div>
<div class="ab" style="left:998.9px;top:210.5px;width:1.0px;height:4.0px;background:#9a9a9a"></div>
<div class="ab" style="left:1009.35px;top:210.5px;width:1.0px;height:4.0px;background:#9a9a9a"></div>
<div class="ab" style="left:1019.8px;top:207.2px;width:1.0px;height:7.300000000000011px;background:#9a9a9a"></div>
<div class="t" style="left:26.10px;width:400px;text-align:center;top:200.90px;font-size:9.8px;color:#4a4a4a;font-family:'Liberation Mono',monospace">1</div>
<div class="t" style="left:193.30px;width:400px;text-align:center;top:200.90px;font-size:9.8px;color:#4a4a4a;font-family:'Liberation Mono',monospace">3</div>
<div class="t" style="left:276.90px;width:400px;text-align:center;top:200.90px;font-size:9.8px;color:#4a4a4a;font-family:'Liberation Mono',monospace">4</div>
<div class="t" style="left:360.50px;width:400px;text-align:center;top:200.90px;font-size:9.8px;color:#4a4a4a;font-family:'Liberation Mono',monospace">5</div>
<div class="t" style="left:527.70px;width:400px;text-align:center;top:200.90px;font-size:9.8px;color:#4a4a4a;font-family:'Liberation Mono',monospace">7</div>
<div class="t" style="left:611.30px;width:400px;text-align:center;top:200.90px;font-size:9.8px;color:#4a4a4a;font-family:'Liberation Mono',monospace">8</div>
<div class="t" style="left:694.90px;width:400px;text-align:center;top:200.90px;font-size:9.8px;color:#4a4a4a;font-family:'Liberation Mono',monospace">9</div>
<div class="t" style="left:778.50px;width:400px;text-align:center;top:200.90px;font-size:9.8px;color:#4a4a4a;font-family:'Liberation Mono',monospace">10</div>
<div class="ab" style="left:302.2px;top:201.2px;width:13.5px;height:11.400000000000006px;background:#ececec;border:1px solid #dcdcdc"></div>
<div class="ab" style="left:309.9px;top:203px;width:1.2000000000000455px;height:8.5px;background:repeating-linear-gradient(#333 0 2px,transparent 2px 3.4px)"></div>
<div class="ab" style="left:498.3px;top:201.2px;width:13.5px;height:11.400000000000006px;background:#ececec;border:1px solid #dcdcdc"></div>
<div class="ab" style="left:505.79999999999995px;top:203px;width:1.2000000000000455px;height:8.5px;background:repeating-linear-gradient(#333 0 2px,transparent 2px 3.4px)"></div>
<div class="ab" style="left:646.5px;top:201.2px;width:13.5px;height:11.400000000000006px;background:#ececec;border:1px solid #dcdcdc"></div>
<div class="ab" style="left:653.4px;top:203px;width:1.2000000000000455px;height:8.5px;background:repeating-linear-gradient(#333 0 2px,transparent 2px 3.4px)"></div>
<svg class="ab" style="left:142.7px;top:203px;overflow:visible" width="10.5" height="9.5" viewBox="0 0 10.5 9.5"><rect x="0" y="0" width="10.5" height="2.6" fill="#4f86ec"/><path d="M0 3.6 H10.5 L5.25 9.2 Z" fill="#4f86ec"/></svg>
<svg class="ab" style="left:297px;top:207px;overflow:visible" width="10" height="5.2" viewBox="0 0 10 5.2"><path d="M0 0 H10 L5 5.2 Z" fill="#4f86ec"/></svg>
<div class="ab" style="left:13px;top:214px;width:1px;height:558px;background:#cdcdcd"></div>
<div class="ab" style="left:13px;top:573px;width:1px;height:199px;background:#7d7d7d"></div>
<div class="ab" style="left:5.7px;top:509.2px;width:7.3px;height:1.0px;background:#8a8a8a"></div>
<div class="ab" style="left:9px;top:519.65px;width:4px;height:1.0px;background:#8a8a8a"></div>
<div class="ab" style="left:9px;top:530.1px;width:4px;height:1.0px;background:#8a8a8a"></div>
<div class="ab" style="left:9px;top:540.55px;width:4px;height:1.0px;background:#8a8a8a"></div>
<div class="ab" style="left:9px;top:551.0px;width:4px;height:1.0px;background:#8a8a8a"></div>
<div class="ab" style="left:9px;top:561.45px;width:4px;height:1.0px;background:#8a8a8a"></div>
<div class="ab" style="left:9px;top:571.9px;width:4px;height:1.0px;background:#8a8a8a"></div>
<div class="ab" style="left:9px;top:582.35px;width:4px;height:1.0px;background:#8a8a8a"></div>
<div class="ab" style="left:5.7px;top:592.8px;width:7.3px;height:1.0px;background:#8a8a8a"></div>
<div class="ab" style="left:9px;top:603.25px;width:4px;height:1.0px;background:#8a8a8a"></div>
<div class="ab" style="left:9px;top:613.7px;width:4px;height:1.0px;background:#8a8a8a"></div>
<div class="ab" style="left:9px;top:624.15px;width:4px;height:1.0px;background:#8a8a8a"></div>
<div class="ab" style="left:9px;top:634.6px;width:4px;height:1.0px;background:#8a8a8a"></div>
<div class="ab" style="left:9px;top:645.05px;width:4px;height:1.0px;background:#8a8a8a"></div>
<div class="ab" style="left:9px;top:655.5px;width:4px;height:1.0px;background:#8a8a8a"></div>
<div class="ab" style="left:9px;top:665.95px;width:4px;height:1.0px;background:#8a8a8a"></div>
<div class="ab" style="left:5.7px;top:676.4px;width:7.3px;height:1.0px;background:#8a8a8a"></div>
<div class="ab" style="left:9px;top:686.85px;width:4px;height:1.0px;background:#8a8a8a"></div>
<div class="ab" style="left:9px;top:697.3px;width:4px;height:1.0px;background:#8a8a8a"></div>
<div class="ab" style="left:9px;top:707.75px;width:4px;height:1.0px;background:#8a8a8a"></div>
<div class="ab" style="left:9px;top:718.2px;width:4px;height:1.0px;background:#8a8a8a"></div>
<div class="ab" style="left:9px;top:728.65px;width:4px;height:1.0px;background:#8a8a8a"></div>
<div class="ab" style="left:9px;top:739.1px;width:4px;height:1.0px;background:#8a8a8a"></div>
<div class="ab" style="left:9px;top:749.55px;width:4px;height:1.0px;background:#8a8a8a"></div>
<div class="ab" style="left:5.7px;top:760.0px;width:7.3px;height:1.0px;background:#8a8a8a"></div>
<div class="t" style="left:-1px;top:630.0px;width:10px;height:9px;font-size:9.8px;text-align:center;color:#4a4a4a;font-family:Liberation Mono,monospace;transform:rotate(-90deg)">1</div>
<div class="t" style="left:-1px;top:714.0px;width:10px;height:9px;font-size:9.8px;text-align:center;color:#4a4a4a;font-family:Liberation Mono,monospace;transform:rotate(-90deg)">2</div>
<div class="ab" style="left:0px;top:608.5px;width:12px;height:12.0px;background:#ececec;border:1px solid #dcdcdc"></div>
<div class="ab" style="left:3px;top:613.9px;width:8px;height:1.2000000000000455px;background:repeating-linear-gradient(90deg,#333 0 2px,transparent 2px 3.4px)"></div>
<div class="ab" style="left:0px;top:637.6px;width:12px;height:12.0px;background:#ececec;border:1px solid #dcdcdc"></div>
<div class="ab" style="left:3px;top:643.0px;width:8px;height:1.2000000000000455px;background:repeating-linear-gradient(90deg,#333 0 2px,transparent 2px 3.4px)"></div>
<div class="ab" style="left:0px;top:666.7px;width:12px;height:12.0px;background:#ececec;border:1px solid #dcdcdc"></div>
<div class="ab" style="left:3px;top:672.1px;width:8px;height:1.2000000000000455px;background:repeating-linear-gradient(90deg,#333 0 2px,transparent 2px 3.4px)"></div>
<div class="ab" style="left:0px;top:695.8px;width:12px;height:12.0px;background:#ececec;border:1px solid #dcdcdc"></div>
<div class="ab" style="left:3px;top:701.1999999999999px;width:8px;height:1.2000000000000455px;background:repeating-linear-gradient(90deg,#333 0 2px,transparent 2px 3.4px)"></div>
<div class="ab" style="left:0px;top:724.9px;width:12px;height:12.0px;background:#ececec;border:1px solid #dcdcdc"></div>
<div class="ab" style="left:3px;top:730.3px;width:8px;height:1.2000000000000455px;background:repeating-linear-gradient(90deg,#333 0 2px,transparent 2px 3.4px)"></div>
<div class="ab" style="left:0px;top:754.0px;width:12px;height:12.0px;background:#ececec;border:1px solid #dcdcdc"></div>
<div class="ab" style="left:3px;top:759.4px;width:8px;height:1.2000000000000455px;background:repeating-linear-gradient(90deg,#333 0 2px,transparent 2px 3.4px)"></div>
<div class="ab" style="left:27.9px;top:229px;width:30.8px;height:30.8px;border-radius:50%;background:#e6eaf1"></div>
<svg class="ab" style="left:36px;top:240px;overflow:visible" width="14" height="9" viewBox="0 0 14 9"><g fill="#444746"><rect x="0" y="0" width="1.6" height="1.5"/><rect x="0" y="3.6" width="1.6" height="1.5"/><rect x="0" y="7.2" width="1.6" height="1.5"/><rect x="3" y="0" width="11" height="1.5"/><rect x="3" y="3.6" width="11" height="1.5"/><rect x="3" y="7.2" width="11" height="1.5"/></g></svg>
<div class="ab" style="left:142.5px;top:228.1px;width:835.7px;height:45.50000000000003px;background:#b7b7b7"></div>
<div class="t" style="left:25.55px;width:400px;text-align:center;top:236.44px;font-size:15px;font-family:'Liberation Serif',serif;font-weight:bold;color:#000">Date</div>
<div class="t" style="left:206.50px;width:400px;text-align:center;top:236.44px;font-size:15px;font-family:'Liberation Serif',serif;font-weight:bold;color:#000">Times</div>
<div class="t" style="left:378.90px;width:400px;text-align:center;top:236.44px;font-size:15px;font-family:'Liberation Serif',serif;font-weight:bold;color:#000">Hour(s) earned each</div>
<div class="t" style="left:378.90px;width:400px;text-align:center;top:252.44px;font-size:15px;font-family:'Liberation Serif',serif;font-weight:bold;color:#000">day</div>
<div class="t" style="left:616.30px;width:400px;text-align:center;top:236.44px;font-size:15px;font-family:'Liberation Serif',serif;font-weight:bold;color:#000">Description of activity or services performed. Be</div>
<div class="t" style="left:615.80px;width:400px;text-align:center;top:252.44px;font-size:15px;font-family:'Liberation Serif',serif;font-weight:bold;color:#000">specific.</div>
<div class="t" style="left:148.70px;top:283.42px;font-size:13.8px;color:#000">10/01/25</div>
<div class="t" style="left:314.80px;top:283.42px;font-size:13.8px;color:#000">Wednesday 8-9</div>
<div class="t" style="left:510.60px;top:283.42px;font-size:13.8px;color:#000">1</div>
<div class="t" style="left:659.60px;top:283.42px;font-size:13.8px;color:#000">Preparing the club activity</div>
<div class="t" style="left:148.70px;top:312.52px;font-size:13.8px;color:#000">10/03/25</div>
<div class="t" style="left:314.80px;top:312.52px;font-size:13.8px;color:#000">Friday 8-9</div>
<div class="t" style="left:510.60px;top:312.52px;font-size:13.8px;color:#000">1</div>
<div class="t" style="left:659.60px;top:312.52px;font-size:13.8px;color:#000">Preparing the club activity</div>
<div class="t" style="left:148.70px;top:341.62px;font-size:13.8px;color:#000">11/0325</div>
<div class="t" style="left:314.80px;top:341.62px;font-size:13.8px;color:#000">Monday 8-9</div>
<div class="t" style="left:510.60px;top:341.62px;font-size:13.8px;color:#000">1</div>
<div class="t" style="left:659.60px;top:341.62px;font-size:13.8px;color:#000">Preparing the club activity</div>
<div class="t" style="left:148.70px;top:370.72px;font-size:13.8px;color:#000">11/10/25</div>
<div class="t" style="left:314.80px;top:370.72px;font-size:13.8px;color:#000">Monday 8-9</div>
<div class="t" style="left:510.60px;top:370.72px;font-size:13.8px;color:#000">1</div>
<div class="t" style="left:659.60px;top:370.72px;font-size:13.8px;color:#000">Preparing the club activity</div>
<div class="t" style="left:148.70px;top:399.82px;font-size:13.8px;color:#000">11/17/25</div>
<div class="t" style="left:314.80px;top:399.82px;font-size:13.8px;color:#000">Monday 8-9</div>
<div class="t" style="left:510.60px;top:399.82px;font-size:13.8px;color:#000">1</div>
<div class="t" style="left:659.60px;top:399.82px;font-size:13.8px;color:#000">Preparing the club activity</div>
<div class="t" style="left:148.70px;top:428.92px;font-size:13.8px;color:#000">11/24/25</div>
<div class="t" style="left:314.80px;top:428.92px;font-size:13.8px;color:#000">Monday 8-9</div>
<div class="t" style="left:510.60px;top:428.92px;font-size:13.8px;color:#000">1</div>
<div class="t" style="left:659.60px;top:428.92px;font-size:13.8px;color:#000">Preparing the club activity</div>
<div class="ab" style="left:142.0px;top:227px;width:836.8000000000001px;height:2px;background:#3a3a3a"></div>
<div class="ab" style="left:142.0px;top:273px;width:836.8000000000001px;height:1px;background:#1f1f1f"></div>
<div class="ab" style="left:142.0px;top:302px;width:836.8000000000001px;height:1px;background:#1f1f1f"></div>
<div class="ab" style="left:142.0px;top:331px;width:836.8000000000001px;height:1px;background:#1f1f1f"></div>
<div class="ab" style="left:142.0px;top:360px;width:836.8000000000001px;height:1px;background:#1f1f1f"></div>
<div class="ab" style="left:142.0px;top:390px;width:836.8000000000001px;height:1px;background:#1f1f1f"></div>
<div class="ab" style="left:142.0px;top:419px;width:836.8000000000001px;height:1px;background:#1f1f1f"></div>
<div class="ab" style="left:142.0px;top:448px;width:836.8000000000001px;height:1px;background:#1f1f1f"></div>
<div class="ab" style="left:142px;top:214px;width:1px;height:235px;background:#1f1f1f"></div>
<div class="ab" style="left:308px;top:228.1px;width:1px;height:220.9px;background:#1f1f1f"></div>
<div class="ab" style="left:504px;top:228.1px;width:1px;height:220.9px;background:#1f1f1f"></div>
<div class="ab" style="left:653px;top:228.1px;width:1px;height:220.9px;background:#1f1f1f"></div>
<div class="ab" style="left:978px;top:214px;width:1px;height:235px;background:#1f1f1f"></div>
<div class="ab" style="left:142.5px;top:568.9px;width:835.7px;height:45.5px;background:#b7b7b7"></div>
<div class="t" style="left:25.55px;width:400px;text-align:center;top:577.04px;font-size:15px;font-family:'Liberation Serif',serif;font-weight:bold;color:#000">Date</div>
<div class="t" style="left:206.50px;width:400px;text-align:center;top:577.04px;font-size:15px;font-family:'Liberation Serif',serif;font-weight:bold;color:#000">Times</div>
<div class="t" style="left:378.90px;width:400px;text-align:center;top:577.04px;font-size:15px;font-family:'Liberation Serif',serif;font-weight:bold;color:#000">Hour(s) earned each</div>
<div class="t" style="left:378.90px;width:400px;text-align:center;top:593.04px;font-size:15px;font-family:'Liberation Serif',serif;font-weight:bold;color:#000">day</div>
<div class="t" style="left:616.30px;width:400px;text-align:center;top:577.04px;font-size:15px;font-family:'Liberation Serif',serif;font-weight:bold;color:#000">Description of activity or services performed. Be</div>
<div class="t" style="left:615.80px;width:400px;text-align:center;top:593.04px;font-size:15px;font-family:'Liberation Serif',serif;font-weight:bold;color:#000">specific.</div>
<div class="t" style="left:148.70px;top:623.72px;font-size:13.8px;color:#000">12/02/25</div>
<div class="t" style="left:314.80px;top:623.72px;font-size:13.8px;color:#000">Tuesday 8-9</div>
<div class="t" style="left:510.60px;top:623.72px;font-size:13.8px;color:#000">1</div>
<div class="t" style="left:659.60px;top:623.72px;font-size:13.8px;color:#000">Preparing the club activity</div>
<div class="t" style="left:148.70px;top:652.82px;font-size:13.8px;color:#000">12/09/25</div>
<div class="t" style="left:314.80px;top:652.82px;font-size:13.8px;color:#000">Tuesday 8-9</div>
<div class="t" style="left:510.60px;top:652.82px;font-size:13.8px;color:#000">1</div>
<div class="t" style="left:659.60px;top:652.82px;font-size:13.8px;color:#000">Preparing the club activity</div>
<div class="t" style="left:148.70px;top:681.92px;font-size:13.8px;color:#000">12/15/25</div>
<div class="t" style="left:314.80px;top:681.92px;font-size:13.8px;color:#000">Monday 8-9</div>
<div class="t" style="left:510.60px;top:681.92px;font-size:13.8px;color:#000">1</div>
<div class="t" style="left:659.60px;top:681.92px;font-size:13.8px;color:#000">Preparing the club activity</div>
<div class="t" style="left:148.70px;top:711.02px;font-size:13.8px;color:#000">01/06/26</div>
<div class="t" style="left:314.80px;top:711.02px;font-size:13.8px;color:#000">Tuesday 8-9</div>
<div class="t" style="left:510.60px;top:711.02px;font-size:13.8px;color:#000">1</div>
<div class="t" style="left:659.60px;top:711.02px;font-size:13.8px;color:#000">Preparing the club activity</div>
<div class="ab" style="left:142.0px;top:567px;width:836.8000000000001px;height:2px;background:#3a3a3a"></div>
<div class="ab" style="left:142.0px;top:614px;width:836.8000000000001px;height:1px;background:#1f1f1f"></div>
<div class="ab" style="left:142.0px;top:643px;width:836.8000000000001px;height:1px;background:#1f1f1f"></div>
<div class="ab" style="left:142.0px;top:672px;width:836.8000000000001px;height:1px;background:#1f1f1f"></div>
<div class="ab" style="left:142.0px;top:701px;width:836.8000000000001px;height:1px;background:#1f1f1f"></div>
<div class="ab" style="left:142.0px;top:730px;width:836.8000000000001px;height:1px;background:#1f1f1f"></div>
<div class="ab" style="left:142.0px;top:759px;width:836.8000000000001px;height:1px;background:#1f1f1f"></div>
<div class="ab" style="left:142.0px;top:789px;width:836.8000000000001px;height:1px;background:#1f1f1f"></div>
<div class="ab" style="left:142px;top:567.9px;width:1px;height:222.10000000000002px;background:#1f1f1f"></div>
<div class="ab" style="left:308px;top:567.9px;width:1px;height:222.10000000000002px;background:#1f1f1f"></div>
<div class="ab" style="left:504px;top:567.9px;width:1px;height:222.10000000000002px;background:#1f1f1f"></div>
<div class="ab" style="left:653px;top:567.9px;width:1px;height:222.10000000000002px;background:#1f1f1f"></div>
<div class="ab" style="left:978px;top:567.9px;width:1px;height:222.10000000000002px;background:#1f1f1f"></div>
<div class="ab" style="left:149.3px;top:738.6px;width:1.299999999999983px;height:15.0px;background:#000"></div>
<div class="ab" style="left:296px;top:734.6px;width:10.699999999999989px;height:9.799999999999955px;background:#f1f1f1;border:1px solid #d0d0d0"></div>
<svg class="ab" style="left:298px;top:737.8px;overflow:visible" width="7" height="4" viewBox="0 0 7 4"><path d="M0 0 H7 L3.5 3.6 Z" fill="#666"/></svg>
<div class="ab" style="left:1140px;top:194px;width:62px;height:578px;background:#f9fbfd"></div>
<svg class="ab" style="left:1169.5px;top:170.3px;overflow:visible" width="17" height="17" viewBox="0 0 17 17"><rect x="0" y="0" width="17" height="17" rx="1.5" fill="#fff"/><path d="M0 1.5 A1.5 1.5 0 0 1 1.5 0 H13 V4 H4 V13 H0 Z" fill="#4285f4"/><path d="M13 0 H15.5 A1.5 1.5 0 0 1 17 1.5 V4 H13 Z" fill="#1967d2"/><path d="M13 4 H17 V13 H13 Z" fill="#fbbc04"/><path d="M4 13 H13 V17 H1.5 A1.5 1.5 0 0 1 0 15.5 V13 Z" fill="#34a853"/><path d="M0 13 H4 V17 H1.5 A1.5 1.5 0 0 1 0 15.5 Z" fill="#188038"/><path d="M13 13 H17 L13 17 Z" fill="#ea4335"/><rect x="4" y="4" width="9" height="9" fill="#fff"/><text x="8.5" y="11.3" font-size="6.8" font-family="Liberation Sans" font-weight="bold" fill="#4285f4" text-anchor="middle">31</text></svg>
<svg class="ab" style="left:1170px;top:218.5px;overflow:visible" width="16" height="18" viewBox="0 0 16 18"><rect x="0" y="0" width="16" height="18" rx="1.8" fill="#f5bd2e"/><circle cx="8" cy="8.2" r="3.6" fill="#fff"/><rect x="6.3" y="11" width="3.4" height="2.8" fill="#fff"/></svg>
<svg class="ab" style="left:1169.5px;top:266.5px;overflow:visible" width="17" height="17" viewBox="0 0 17 17"><circle cx="8.5" cy="8.8" r="6.6" fill="none" stroke="#1a73e8" stroke-width="2.6"/><path d="M5.2 8.8 L7.8 11.2 L15.5 3.2" fill="none" stroke="#1a73e8" stroke-width="2.6"/><circle cx="8.5" cy="8.8" r="0" fill="#fff"/></svg>
<svg class="ab" style="left:1171px;top:315.5px;overflow:visible" width="14" height="17" viewBox="0 0 14 17"><circle cx="7" cy="4" r="3" fill="#2a62d6"/><path d="M1.5 16 V12.3 A3.8 3.8 0 0 1 5.3 8.5 H8.7 A3.8 3.8 0 0 1 12.5 12.3 V14 A2 2 0 0 1 10.5 16 Z" fill="#2a62d6"/></svg>
<div class="ab" style="left:1167px;top:362.5px;width:22px;height:1.0px;background:#e0e2e6"></div>
<svg class="ab" style="left:1171.5px;top:395px;overflow:visible" width="13" height="13" viewBox="0 0 13 13"><path d="M6.5 0.5 V12.5 M0.5 6.5 H12.5" stroke="#1f1f1f" stroke-width="1.6"/></svg>
<div class="ab" style="left:1143.5px;top:327.5px;width:6.5px;height:131px;border-radius:3.2px;background:#dadce0"></div>
<svg class="ab" style="left:1174px;top:742px;overflow:visible" width="8" height="10" viewBox="0 0 8 10"><path d="M2 1.2 L6 5 L2 8.8" fill="none" stroke="#444746" stroke-width="1.5"/></svg>
<div class="ab" style="left:0px;top:730px;width:1202px;height:42px;background:linear-gradient(rgba(0,0,0,0),rgba(40,20,60,.09))"></div>
</div></div>
<div id="dock"></div>
<svg width="0" height="0" style="position:absolute"><defs>
<linearGradient id="gFinderL" x1="0" y1="0" x2="0" y2="1"><stop offset="0" stop-color="#5ec6f8"/><stop offset="1" stop-color="#2a6fe6"/></linearGradient>
<linearGradient id="gFinderR" x1="0" y1="0" x2="0" y2="1"><stop offset="0" stop-color="#f4f4f6"/><stop offset="1" stop-color="#d6dbe3"/></linearGradient>
<linearGradient id="gGreen" x1="0" y1="0" x2="0" y2="1"><stop offset="0" stop-color="#6ee07a"/><stop offset="1" stop-color="#2fb542"/></linearGradient>
<linearGradient id="gMail" x1="0" y1="0" x2="0" y2="1"><stop offset="0" stop-color="#2f8cf6"/><stop offset="1" stop-color="#5cc3fb"/></linearGradient>
<linearGradient id="gBlue" x1="0" y1="0" x2="0" y2="1"><stop offset="0" stop-color="#3fa6f8"/><stop offset="1" stop-color="#1d6ae8"/></linearGradient>
<linearGradient id="gMusic" x1="0" y1="0" x2="0" y2="1"><stop offset="0" stop-color="#f85c70"/><stop offset="1" stop-color="#e3283f"/></linearGradient>
<linearGradient id="gPages" x1="0" y1="0" x2="0" y2="1"><stop offset="0" stop-color="#fba940"/><stop offset="1" stop-color="#f28c1e"/></linearGradient>
<linearGradient id="gNum" x1="0" y1="0" x2="0" y2="1"><stop offset="0" stop-color="#6ad66a"/><stop offset="1" stop-color="#30b53b"/></linearGradient>
<linearGradient id="gSet" x1="0" y1="0" x2="0" y2="1"><stop offset="0" stop-color="#a9a9ad"/><stop offset="1" stop-color="#6f6f74"/></linearGradient>
<linearGradient id="gTV" x1="0" y1="0" x2="0" y2="1"><stop offset="0" stop-color="#2a2c2c"/><stop offset="1" stop-color="#111312"/></linearGradient>
<linearGradient id="gContacts" x1="0" y1="0" x2="0" y2="1"><stop offset="0" stop-color="#b08a5a"/><stop offset="1" stop-color="#8f6b3e"/></linearGradient>
</defs></svg>
<svg class="ab" style="left:45.00px;top:782px" width="33" height="33" viewBox="0 0 33 33"><rect x="0" y="0" width="33" height="33" rx="7.5" fill="url(#gFinderR)"/><path d="M7.5 0 H19 C16.5 6 15 12 14.5 18.5 H18 C18 24 18.5 28.5 20 33 H7.5 A7.5 7.5 0 0 1 0 25.5 V7.5 A7.5 7.5 0 0 1 7.5 0 Z" fill="url(#gFinderL)"/><path d="M6.5 21.5 Q16.5 28.5 27 21.5" fill="none" stroke="#1d2430" stroke-width="1.2"/><rect x="8.3" y="9" width="1.4" height="3.2" rx="0.7" fill="#1d2430"/><rect x="23.6" y="9" width="1.4" height="3.2" rx="0.7" fill="#1d2430"/></svg>
<svg class="ab" style="left:89.65px;top:782px" width="33" height="33" viewBox="0 0 33 33"><rect x="0" y="0" width="33" height="33" rx="7.5" fill="#ece6ee"/><rect x="5.6" y="5.6" width="6.2" height="6.2" rx="1.5" fill="#5fd35c"/><rect x="13.399999999999999" y="5.6" width="6.2" height="6.2" rx="1.5" fill="#f5b93a"/><rect x="21.2" y="5.6" width="6.2" height="6.2" rx="1.5" fill="#f39a2f"/><rect x="5.6" y="13.399999999999999" width="6.2" height="6.2" rx="1.5" fill="#e8453c"/><rect x="13.399999999999999" y="13.399999999999999" width="6.2" height="6.2" rx="1.5" fill="#a9a9ad"/><rect x="21.2" y="13.399999999999999" width="6.2" height="6.2" rx="1.5" fill="#f05670"/><rect x="5.6" y="21.2" width="6.2" height="6.2" rx="1.5" fill="#9d4fe0"/><rect x="13.399999999999999" y="21.2" width="6.2" height="6.2" rx="1.5" fill="#3b9cf5"/><rect x="21.2" y="21.2" width="6.2" height="6.2" rx="1.5" fill="#55d1c0"/></svg>
<svg class="ab" style="left:134.30px;top:782px" width="33" height="33" viewBox="0 0 33 33"><rect x="0" y="0" width="33" height="33" rx="7.5" fill="#f3f3f5"/><circle cx="16.5" cy="16.5" r="13.5" fill="url(#gBlue)"/><circle cx="16.5" cy="16.5" r="12" fill="none" stroke="#fff" stroke-width="0.6" stroke-dasharray="0.6 1.4" opacity="0.8"/><path d="M25 8 L18 18.5 L15 14.5 Z" fill="#f2453d"/><path d="M8 25 L15 14.5 L18 18.5 Z" fill="#fff"/></svg>
<svg class="ab" style="left:178.95px;top:782px" width="33" height="33" viewBox="0 0 33 33"><rect x="0" y="0" width="33" height="33" rx="7.5" fill="url(#gGreen)"/><ellipse cx="16.5" cy="15.8" rx="11" ry="8.6" fill="#fff"/><path d="M9.5 21 L8.5 26.5 L14 23 Z" fill="#fff"/></svg>
<svg class="ab" style="left:223.60px;top:782px" width="33" height="33" viewBox="0 0 33 33"><rect x="0" y="0" width="33" height="33" rx="7.5" fill="url(#gMail)"/><rect x="5.5" y="9.5" width="22" height="14.5" rx="1.5" fill="#f4f6f8"/><path d="M5.8 10 L16.5 18.5 L27.2 10" fill="none" stroke="#b6c2cc" stroke-width="1"/><path d="M5.8 23.5 L13.5 16 M27.2 23.5 L19.5 16" stroke="#c9d2da" stroke-width="0.8"/></svg>
<svg class="ab" style="left:268.25px;top:782px" width="33" height="33" viewBox="0 0 33 33"><rect x="0" y="0" width="33" height="33" rx="7.5" fill="#eef3e6"/><path d="M0 7.5 A7.5 7.5 0 0 1 7.5 0 H11 L9 33 H7.5 A7.5 7.5 0 0 1 0 25.5 Z" fill="#ef9fc5"/><path d="M21 0 H25.5 A7.5 7.5 0 0 1 33 7.5 V13 Z" fill="#a6dfa0"/><path d="M33 24 V25.5 A7.5 7.5 0 0 1 25.5 33 H19 Z" fill="#fbd660"/><path d="M14 0 H19 L18.5 33 H13.5 Z" fill="#3a88f0"/><path d="M33 14 L9 33 H14 L33 20 Z" fill="#ffffff" opacity="0.95"/><path d="M24 2 A9 9 0 0 1 33 11" fill="none" stroke="#6fb56a" stroke-width="1.5"/><circle cx="16.5" cy="20" r="6.5" fill="#fff"/><circle cx="16.5" cy="20" r="5.3" fill="#2d77ea"/><path d="M16.5 16 L19.2 23 L16.5 21.6 L13.8 23 Z" fill="#fff"/></svg>
<svg class="ab" style="left:312.90px;top:782px" width="33" height="33" viewBox="0 0 33 33"><rect x="0" y="0" width="33" height="33" rx="7.5" fill="#fafafa"/><ellipse cx="16.5" cy="10.2" rx="3.6" ry="6.3" fill="#f6b73c" opacity="0.82" transform="rotate(0 16.5 16.5)"/><ellipse cx="16.5" cy="10.2" rx="3.6" ry="6.3" fill="#f08a36" opacity="0.82" transform="rotate(45 16.5 16.5)"/><ellipse cx="16.5" cy="10.2" rx="3.6" ry="6.3" fill="#e9475a" opacity="0.82" transform="rotate(90 16.5 16.5)"/><ellipse cx="16.5" cy="10.2" rx="3.6" ry="6.3" fill="#b35fd6" opacity="0.82" transform="rotate(135 16.5 16.5)"/><ellipse cx="16.5" cy="10.2" rx="3.6" ry="6.3" fill="#5b7ff0" opacity="0.82" transform="rotate(180 16.5 16.5)"/><ellipse cx="16.5" cy="10.2" rx="3.6" ry="6.3" fill="#52b5e6" opacity="0.82" transform="rotate(225 16.5 16.5)"/><ellipse cx="16.5" cy="10.2" rx="3.6" ry="6.3" fill="#5cc96b" opacity="0.82" transform="rotate(270 16.5 16.5)"/><ellipse cx="16.5" cy="10.2" rx="3.6" ry="6.3" fill="#b9d94a" opacity="0.82" transform="rotate(315 16.5 16.5)"/></svg>
<svg class="ab" style="left:357.55px;top:782px" width="33" height="33" viewBox="0 0 33 33"><rect x="0" y="0" width="33" height="33" rx="7.5" fill="url(#gGreen)"/><rect x="6" y="11" width="14.5" height="11.5" rx="2.6" fill="#fff"/><path d="M21.5 15.5 L27.5 11.5 V22 L21.5 18 Z" fill="#fff"/></svg>
<svg class="ab" style="left:402.20px;top:782px" width="33" height="33" viewBox="0 0 33 33"><rect x="0" y="0" width="33" height="33" rx="7.5" fill="#fbfbfb"/><path d="M0 7.5 A7.5 7.5 0 0 1 7.5 0 H25.5 A7.5 7.5 0 0 1 33 7.5 V10 H0 Z" fill="#f0503f"/><text x="16.5" y="8" font-size="6.2" font-family="Liberation Sans" font-weight="bold" fill="#fff" text-anchor="middle">JAN</text><text x="16.5" y="28.5" font-size="17" font-family="Liberation Sans" fill="#2a2a2a" text-anchor="middle">6</text></svg>
<svg class="ab" style="left:446.85px;top:782px" width="33" height="33" viewBox="0 0 33 33"><rect x="0" y="0" width="33" height="33" rx="7.5" fill="#fcfcfc"/><circle cx="7" cy="8.3" r="2" fill="#3b82f6"/><circle cx="7" cy="16.5" r="2" fill="#ef4444"/><circle cx="7" cy="24.6" r="2" fill="#f59e0b"/><path d="M11.5 8.3 H28 M11.5 16.5 H28 M11.5 24.6 H28" stroke="#d4d4d8" stroke-width="0.8"/></svg>
<svg class="ab" style="left:491.50px;top:782px" width="33" height="33" viewBox="0 0 33 33"><rect x="0" y="0" width="33" height="33" rx="7.5" fill="url(#gContacts)"/><rect x="31" y="9" width="2" height="4" fill="#5bc0eb"/><rect x="31" y="14" width="2" height="4" fill="#9bd45b"/><rect x="31" y="19" width="2" height="4" fill="#f6a04d"/><circle cx="16" cy="16.5" r="9.5" fill="none" stroke="#7a5a33" stroke-width="1"/><circle cx="16" cy="13.5" r="3.6" fill="#7a5a33" opacity="0.8"/><path d="M9.5 23 A7.5 6 0 0 1 22.5 23" fill="#7a5a33" opacity="0.8"/></svg>
<svg class="ab" style="left:536.15px;top:782px" width="33" height="33" viewBox="0 0 33 33"><rect x="0" y="0" width="33" height="33" rx="7.5" fill="#f6f3ea"/><path d="M0 7.5 A7.5 7.5 0 0 1 7.5 0 H25.5 A7.5 7.5 0 0 1 33 7.5 V9 H0 Z" fill="#fcd34d"/><path d="M3 15 H30 M3 21 H30 M3 27 H30" stroke="#dcd8cc" stroke-width="0.7"/></svg>
<svg class="ab" style="left:580.80px;top:782px" width="33" height="33" viewBox="0 0 33 33"><rect x="0" y="0" width="33" height="33" rx="7.5" fill="#fafafa"/><rect x="14" y="5" width="15" height="14" rx="2" fill="#62c7f5"/><circle cx="13" cy="21.5" r="8" fill="#f2785a"/><path d="M7 23 C9 15 12 12 13 17 C14 22 16 12 18 15 C19 17 20 16 23 14" fill="none" stroke="#1e3a6e" stroke-width="1.8" stroke-linecap="round"/></svg>
<svg class="ab" style="left:625.45px;top:782px" width="33" height="33" viewBox="0 0 33 33"><rect x="0" y="0" width="33" height="33" rx="7.5" fill="url(#gTV)"/><path d="M9.6 12.3 C10.4 12.3 11 11.6 11 10.8 C10.2 10.8 9.5 11.5 9.6 12.3 Z M9.8 12.9 C9 12.9 8.5 13.4 8 13.4 C7.5 13.4 6.9 12.9 6.3 12.9 C5.1 12.9 4.2 14 4.2 15.6 C4.2 17.6 5.5 19.8 6.5 19.8 C7.1 19.8 7.4 19.4 8 19.4 C8.6 19.4 8.9 19.8 9.5 19.8 C10.3 19.8 11 18.4 11.3 17.6 C10.5 17.2 10.2 16.4 10.2 15.6 C10.2 14.8 10.7 14.1 11.2 13.8 C10.8 13.2 10.2 12.9 9.8 12.9 Z" fill="#fff"/><text x="20.5" y="19.6" font-size="10" font-family="Liberation Sans" font-weight="bold" fill="#fff" text-anchor="middle">tv</text></svg>
<svg class="ab" style="left:670.10px;top:782px" width="33" height="33" viewBox="0 0 33 33"><rect x="0" y="0" width="33" height="33" rx="7.5" fill="url(#gMusic)"/><path d="M13 22.5 V9.5 L24 7 V20" fill="none" stroke="#fff" stroke-width="2"/><ellipse cx="10.6" cy="22.8" rx="3.2" ry="2.7" fill="#fff"/><ellipse cx="21.6" cy="20.3" rx="3.2" ry="2.7" fill="#fff"/><path d="M13 12.5 L24 10" stroke="#fff" stroke-width="2.2"/></svg>
<svg class="ab" style="left:714.75px;top:782px" width="33" height="33" viewBox="0 0 33 33"><rect x="0" y="0" width="33" height="33" rx="7.5" fill="#fcfcfc"/><path d="M7.5 7 H12.5 L25.5 21 V26 H20.5 L7.5 12 Z" fill="#e94560"/><path d="M7.5 14.5 L18 26 H7.5 Z M15 7 H25.5 V18.5 Z" fill="#e94560"/></svg>
<svg class="ab" style="left:759.40px;top:782px" width="33" height="33" viewBox="0 0 33 33"><rect x="0" y="0" width="33" height="33" rx="7.5" fill="url(#gBlue)"/><rect x="7" y="7.5" width="19" height="10" rx="1" fill="#f5f5f5"/><circle cx="16.5" cy="10.8" r="2.3" fill="#f0a32c"/><path d="M16.5 10.8 V8.5 A2.3 2.3 0 0 1 18.8 10.8 Z" fill="#e24a3b"/><path d="M16.5 17.5 V25.5 M12.5 26 H20.5" stroke="#e8e8e8" stroke-width="1.3"/></svg>
<svg class="ab" style="left:804.05px;top:782px" width="33" height="33" viewBox="0 0 33 33"><rect x="0" y="0" width="33" height="33" rx="7.5" fill="url(#gNum)"/><rect x="7" y="19" width="3.2" height="8" rx="0.8" fill="#fff"/><rect x="12.5" y="13" width="3.2" height="14" rx="0.8" fill="#fff"/><rect x="18" y="5.5" width="3.2" height="21.5" rx="0.8" fill="#fff"/><rect x="23.5" y="10" width="3.2" height="17" rx="0.8" fill="#fff"/></svg>
<svg class="ab" style="left:848.70px;top:782px" width="33" height="33" viewBox="0 0 33 33"><rect x="0" y="0" width="33" height="33" rx="7.5" fill="url(#gPages)"/><path d="M25.5 6 L27 7.5 L10 24.5 L7.5 25.5 L8.5 23 Z" fill="#fff"/><path d="M7 27.5 H27" stroke="#f7c98a" stroke-width="1"/></svg>
<svg class="ab" style="left:893.35px;top:782px" width="33" height="33" viewBox="0 0 33 33"><rect x="0" y="0" width="33" height="33" rx="7.5" fill="url(#gBlue)"/><g stroke="#fff" stroke-width="2.3" stroke-linecap="round" fill="none"><path d="M14.5 6.5 L23.5 23 M18.5 6.5 L10 22 M6.5 20 H26.5 M8.5 25.5 L10 23"/></g></svg>
<svg class="ab" style="left:938.00px;top:782px" width="33" height="33" viewBox="0 0 33 33"><rect x="0" y="0" width="33" height="33" rx="7.5" fill="url(#gSet)"/><circle cx="16.5" cy="16.5" r="12.5" fill="#3a3a3c"/><circle cx="16.5" cy="16.5" r="10.5" fill="none" stroke="#8e8e93" stroke-width="1.8"/><circle cx="16.5" cy="16.5" r="3" fill="none" stroke="#8e8e93" stroke-width="1.6"/><path d="M16.5 13.5 V6.5 M19 18 L25 21.5 M14 18 L8 21.5" stroke="#8e8e93" stroke-width="1.8"/></svg>
<svg class="ab" style="left:982.65px;top:782px" width="33" height="33" viewBox="0 0 33 33"><rect x="0" y="0" width="33" height="33" rx="7.5" fill="#f7f7f7"/><g transform="translate(3.5,3.5) scale(0.65)"><circle cx="20" cy="20" r="19.4" fill="#dd4b3e"/><path d="M20 20 L36.8 10.3 A19.4 19.4 0 0 1 30 36.6 Z" fill="#f6c443"/><path d="M20 20 L30 36.6 A19.4 19.4 0 0 1 3.2 10.3 Z" fill="#3aa357"/><path d="M20 20 L3.2 10.3 A19.4 19.4 0 0 1 3.3 10.2 Z" fill="#3aa357"/><circle cx="20" cy="20" r="9" fill="#fff"/><circle cx="20" cy="20" r="7.2" fill="#4a7fe4"/></g></svg>
<div class="ab" style="left:1032px;top:781px;width:1px;height:39px;background:rgba(80,50,100,.35)"></div>
<div class="ab" style="left:1185.5px;top:781px;width:1.0px;height:39px;background:rgba(80,50,100,.35)"></div>
<svg class="ab" style="left:1048.10px;top:782px" width="33" height="33" viewBox="0 0 33 33"><rect x="0" y="0" width="33" height="33" rx="7.5" fill="#121212"/><circle cx="16.5" cy="16.5" r="12.8" fill="#5fd06b"/><path d="M9 12.8 Q17 10.5 24.5 14 M10 17 Q17 15.2 23.3 18.2 M11 21 Q16.5 19.6 22 22" fill="none" stroke="#121212" stroke-width="2" stroke-linecap="round"/></svg>
<svg class="ab" style="left:1092.7px;top:779px;overflow:visible" width="36" height="40" viewBox="0 0 36 40"><rect x="0.5" y="3" width="32" height="33" rx="7" fill="#fdfdfd"/><path d="M1 8.5 H32 M1 12.5 H32 M1 16.5 H32 M1 20.5 H32 M1 24.5 H32 M1 28.5 H32 M1 32.5 H32" stroke="#c9c9cc" stroke-width="0.7"/><path d="M5.5 3 V36" stroke="#f2b8b8" stroke-width="0.7"/><path d="M29.5 0.8 L31.5 2 L14 36 L12.2 37.5 L12.4 35 Z" fill="#a9c4dc"/><path d="M30.3 1.3 L13 36.3" stroke="#6d8aa6" stroke-width="0.8"/><path d="M12.2 37.5 L13.3 34.8 L14.3 35.6 Z" fill="#333"/></svg>
<svg class="ab" style="left:1137.5px;top:781.5px;overflow:visible" width="36" height="38" viewBox="0 0 36 38"><rect x="0.5" y="0.5" width="32" height="33" rx="7" fill="#f5f5f5"/><rect x="2.8" y="2.8" width="27.5" height="28.5" rx="4.5" fill="#a7c1ea"/><path d="M2.8 17 H30.3 V20 H2.8 Z" fill="#1f3a78"/><path d="M2.8 20 H30.3 V26.8 A4.5 4.5 0 0 1 25.8 31.3 H7.3 A4.5 4.5 0 0 1 2.8 26.8 Z" fill="#dfe7ee"/><path d="M5 25 L10 23 L14 26 L9 28 Z" fill="#8a7a66"/><path d="M14.5 20.5 Q20 18 27 21 L28.5 34.5 Q21 36.5 14 34.5 Z" fill="#e8ecef" opacity="0.92"/><path d="M16 17 H27 A1.5 1.5 0 0 1 28.5 18.5 V21 H14.5 V18.5 A1.5 1.5 0 0 1 16 17 Z" fill="#121212"/><path d="M14 22 L14.5 34 M28.5 22 L28 34" stroke="#9aa0a6" stroke-width="0.8"/><path d="M19 27 H24 M19.5 29.5 H23" stroke="#445" stroke-width="0.6"/></svg>
<svg class="ab" style="left:1203px;top:779px;overflow:visible" width="30" height="38" viewBox="0 0 30 38"><path d="M1.5 6.5 H28.5 L25.8 35 A2.5 2.5 0 0 1 23.3 37 H6.7 A2.5 2.5 0 0 1 4.2 35 Z" fill="#eceef0"/><path d="M4 9 Q15 15 27 9 L25 33 Q15 36 6 33 Z" fill="#f6f7f8" opacity="0.7"/><ellipse cx="15" cy="6.5" rx="13.5" ry="2.6" fill="#d9dcdf"/><path d="M3.5 6 L7 1.5 L11 5 L14 0.8 L18 4.5 L22 1.2 L26.5 6 Z" fill="#8f969c"/><path d="M7 2.5 L10 6 L6 6.5 Z" fill="#4fb0c6"/><path d="M18 2.5 L23 5.5 L19 6.2 Z" fill="#6a5acd"/><circle cx="13" cy="4.5" r="1.3" fill="#e0e0e0"/></svg>
<div class="ab" style="left:201.5px;top:779px;width:13px;height:13px;border-radius:50%;background:#ea4335;color:#fff;font-size:9px;font-weight:bold;text-align:center;line-height:13px">2</div>
<div class="ab" style="left:59.80px;top:822.3px;width:3.4px;height:3.4px;border-radius:50%;background:#4a2a6a"></div>
<div class="ab" style="left:149.10px;top:822.3px;width:3.4px;height:3.4px;border-radius:50%;background:#4a2a6a"></div>
<div class="ab" style="left:193.75px;top:822.3px;width:3.4px;height:3.4px;border-radius:50%;background:#4a2a6a"></div>
<div class="ab" style="left:238.40px;top:822.3px;width:3.4px;height:3.4px;border-radius:50%;background:#4a2a6a"></div>
<div class="ab" style="left:283.05px;top:822.3px;width:3.4px;height:3.4px;border-radius:50%;background:#4a2a6a"></div>
<div class="ab" style="left:550.95px;top:822.3px;width:3.4px;height:3.4px;border-radius:50%;background:#4a2a6a"></div>
<div class="ab" style="left:684.90px;top:822.3px;width:3.4px;height:3.4px;border-radius:50%;background:#4a2a6a"></div>
<div class="ab" style="left:997.45px;top:822.3px;width:3.4px;height:3.4px;border-radius:50%;background:#4a2a6a"></div>
<div class="ab" style="left:1062.90px;top:822.3px;width:3.4px;height:3.4px;border-radius:50%;background:#4a2a6a"></div>
</body></html>
